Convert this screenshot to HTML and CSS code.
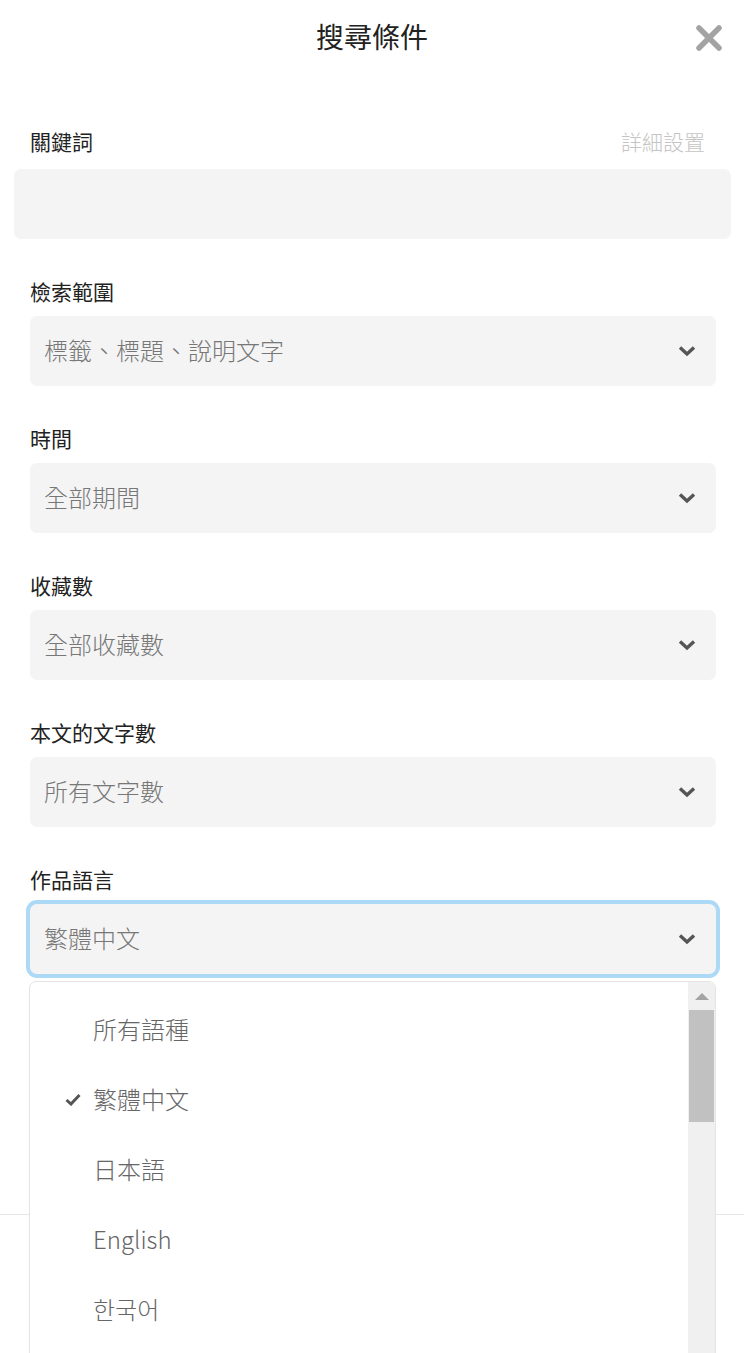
FILE: index.html
```html
<!DOCTYPE html>
<html lang="zh-Hant">
<head>
<meta charset="utf-8">
<title>搜尋條件</title>
<link rel="stylesheet" href="styles.css">
</head>
<body>
<div class="page">
  <header class="header">
    <span></span>
    <h1 class="title">搜尋條件</h1>
    <button class="close" aria-label="close">
      <svg width="28" height="28" viewBox="0 0 28 28"><path d="M4 4 L24 24 M24 4 L4 24" stroke="#a3a3a3" stroke-width="5.5" stroke-linecap="round" fill="none"/></svg>
    </button>
  </header>

  <section class="field field-keyword">
    <div class="label-row">
      <span class="label">關鍵詞</span>
      <span class="detail">詳細設置</span>
    </div>
    <div class="input"></div>
  </section>

  <section class="field">
    <div class="label">檢索範圍</div>
    <div class="select"><span class="value">標籤、標題、說明文字</span><svg class="chev" width="18" height="12" viewBox="0 0 18 12"><path d="M2 2.5 L9 9 L16 2.5" stroke="#555" stroke-width="3.4" fill="none"/></svg></div>
  </section>

  <section class="field">
    <div class="label">時間</div>
    <div class="select"><span class="value">全部期間</span><svg class="chev" width="18" height="12" viewBox="0 0 18 12"><path d="M2 2.5 L9 9 L16 2.5" stroke="#555" stroke-width="3.4" fill="none"/></svg></div>
  </section>

  <section class="field">
    <div class="label">收藏數</div>
    <div class="select"><span class="value">全部收藏數</span><svg class="chev" width="18" height="12" viewBox="0 0 18 12"><path d="M2 2.5 L9 9 L16 2.5" stroke="#555" stroke-width="3.4" fill="none"/></svg></div>
  </section>

  <section class="field">
    <div class="label">本文的文字數</div>
    <div class="select"><span class="value">所有文字數</span><svg class="chev" width="18" height="12" viewBox="0 0 18 12"><path d="M2 2.5 L9 9 L16 2.5" stroke="#555" stroke-width="3.4" fill="none"/></svg></div>
  </section>

  <section class="field">
    <div class="label">作品語言</div>
    <div class="select-wrap">
      <div class="select focused"><span class="value">繁體中文</span><svg class="chev" width="18" height="12" viewBox="0 0 18 12"><path d="M2 2.5 L9 9 L16 2.5" stroke="#555" stroke-width="3.4" fill="none"/></svg></div>
      <div class="dropdown">
        <ul class="options">
          <li class="option">所有語種</li>
          <li class="option selected"><svg class="check" width="16" height="13" viewBox="0 0 16 13"><path d="M1.5 7 L6 11 L14.5 2" stroke="#555" stroke-width="3" fill="none"/></svg>繁體中文</li>
          <li class="option">日本語</li>
          <li class="option">English</li>
          <li class="option">한국어</li>
        </ul>
        <div class="scrollbar">
          <div class="arrow"></div>
          <div class="thumb"></div>
        </div>
      </div>
    </div>
  </section>

  <footer class="footer"></footer>
</div>
</body>
</html>
```

FILE: styles.css
```css
* { box-sizing: border-box; }
html, body {
  margin: 0;
  padding: 0;
  background: #fff;
  height: 1353px;
  overflow: hidden;
}
body {
  font-family: "Noto Sans CJK TC", "Noto Sans", sans-serif;
  color: #222;
}
.page {
  display: flex;
  flex-direction: column;
  width: 744px;
}
.header {
  display: grid;
  grid-template-columns: 1fr auto 1fr;
  align-items: center;
  height: 76px;
}
.title {
  margin: 0 0 4px 0;
  font-size: 28px;
  font-weight: 400;
  line-height: 36px;
  color: #222;
}
.close {
  justify-self: end;
  margin-right: 21px;
  padding: 0;
  border: 0;
  background: none;
  width: 28px;
  height: 28px;
  display: flex;
}
.field {
  display: flex;
  flex-direction: column;
  padding: 0 28px 0 30px;
  margin-top: 40px;
}
.field-keyword {
  margin-top: 53px;
  padding: 0 13px 0 14px;
}
.label-row {
  display: flex;
  justify-content: space-between;
  align-items: flex-start;
  padding: 0 26px 0 16px;
  margin-bottom: 16px;
}
.label {
  font-size: 21px;
  line-height: 24px;
  color: #222;
  margin-bottom: 13px;
}
.label-row .label { margin-bottom: 0; }
.detail {
  font-size: 21px;
  line-height: 24px;
  color: #c4c4c4;
  font-weight: 300;
}
.input {
  height: 70px;
  background: #f4f4f4;
  border-radius: 7px;
}
.select {
  height: 70px;
  background: #f4f4f4;
  border-radius: 7px;
  display: flex;
  align-items: center;
  justify-content: space-between;
  padding: 0 20px 0 14px;
}
.value {
  font-size: 24px;
  line-height: 32px;
  color: #777;
  font-weight: 300;
  margin-bottom: 2px;
}
.chev { display: block; }
.select-wrap { position: relative; }
.select.focused {
  box-shadow: 0 0 0 4px #acdaf6;
}
.dropdown {
  position: absolute;
  left: -1px;
  right: 0;
  top: 77px;
  height: 400px;
  background: #fff;
  border: 1px solid #e4e4e4;
  border-radius: 7px 7px 0 0;
  display: flex;
  z-index: 5;
}
.options {
  list-style: none;
  margin: 0;
  padding: 11px 0 0 0;
  flex: 1;
}
.option {
  position: relative;
  height: 70px;
  display: flex;
  align-items: center;
  padding-left: 63px;
  font-size: 24px;
  color: #666;
  font-weight: 300;
}
.check {
  position: absolute;
  left: 35px;
  top: 30px;
}
.scrollbar {
  width: 27px;
  background: #f0f0f0;
  display: flex;
  flex-direction: column;
  align-items: center;
  border-top-right-radius: 6px;
}
.arrow {
  width: 0;
  height: 0;
  border-left: 7px solid transparent;
  border-right: 7px solid transparent;
  border-bottom: 7px solid #a3a3a3;
  margin-top: 11px;
}
.thumb {
  width: 25px;
  height: 112px;
  background: #c1c1c1;
  margin-top: 10px;
}
.footer {
  margin-top: 240px;
  border-top: 1px solid #e6e6e6;
  height: 140px;
}
```
